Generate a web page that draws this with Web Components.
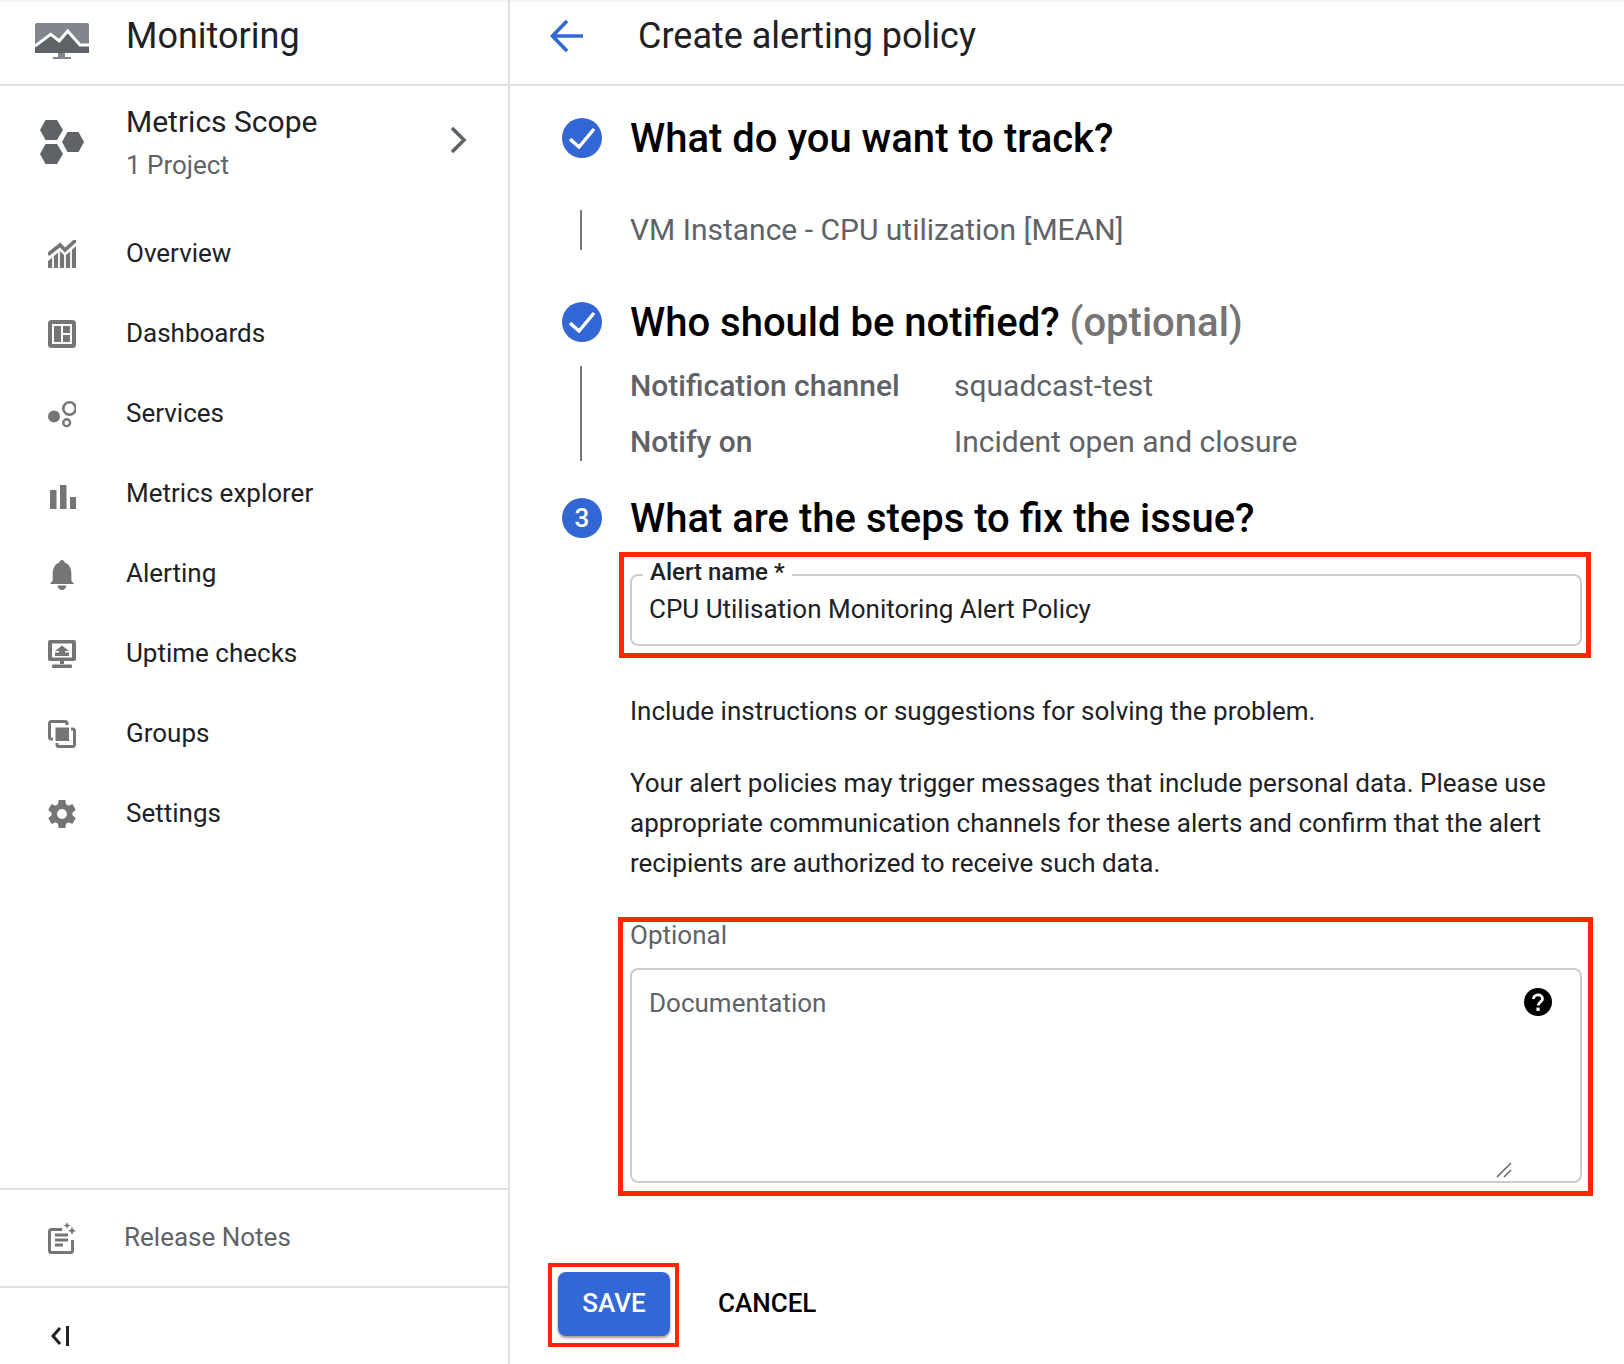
<!DOCTYPE html>
<html lang="en"><head><meta charset="utf-8"><title>Create alerting policy</title>
<style>
html,body{margin:0;padding:0;background:#fff}
body{font-family:Roboto,"Liberation Sans",sans-serif;color:#202124}
</style></head>
<body>
<mon-shell>
  <mon-sidebar slot="side">
    <mon-brand slot="top" title-text="Monitoring"></mon-brand>
    <mon-scope slot="top"></mon-scope>
    <nav-item icon="overview" label="Overview" slot="nav"></nav-item>
    <nav-item icon="dashboards" label="Dashboards" slot="nav"></nav-item>
    <nav-item icon="services" label="Services" slot="nav"></nav-item>
    <nav-item icon="metrics" label="Metrics explorer" slot="nav"></nav-item>
    <nav-item icon="alerting" label="Alerting" slot="nav"></nav-item>
    <nav-item icon="uptime" label="Uptime checks" slot="nav"></nav-item>
    <nav-item icon="groups" label="Groups" slot="nav"></nav-item>
    <nav-item icon="settings" label="Settings" slot="nav"></nav-item>
    <mon-sidefoot slot="foot"></mon-sidefoot>
  </mon-sidebar>
  <mon-page slot="main">
    <page-header>Create alerting policy</page-header>
    <step-head state="done" style="margin-top:32px">What do you want to track?</step-head>
    <step-line style="margin-top:52px;height:40px"><span class="sum" style="font-size:30px;color:#5f6368;margin-top:-2px">VM Instance - CPU utilization [MEAN]</span></step-line>
    <step-head state="done" style="margin-top:52px">Who should be notified? <span style="color:#757575">(optional)</span></step-head>
    <step-line style="margin-top:24px;height:95px">
      <kv-rows></kv-rows>
    </step-line>
    <step-head state="3" style="margin-top:37px">What are the steps to fix the issue?</step-head>
    <alert-name-field style="margin-top:14px"></alert-name-field>
    <help-copy></help-copy>
    <doc-field></doc-field>
    <form-actions></form-actions>
  </mon-page>
</mon-shell>
<script>
const G='#757575';
const ICONS={
overview:`<svg width="28" height="28" viewBox="0 0 28 28"><path d="M0 21l12-10 5 5L28 6v22H0z" fill="${G}"/><path d="M5 10v18M11 10v18M17 10v18M23 4v24" stroke="#fff" stroke-width="1.800" fill="none"/><path d="M0 14.500L12 5l5 5L28 0" fill="none" stroke="${G}" stroke-width="3.600"/></svg>`,
dashboards:`<svg width="28" height="28" viewBox="0 0 28 28"><rect width="28" height="28" rx="3.500" fill="${G}"/><rect x="4" y="4" width="20" height="20" fill="#fff"/><rect x="6" y="6" width="7" height="16" fill="${G}"/><rect x="15" y="6" width="7" height="7" fill="${G}"/><rect x="15" y="15" width="7" height="7" fill="${G}"/></svg>`,
services:`<svg width="28" height="28" viewBox="0 0 28 28" fill="none" stroke="${G}"><circle cx="6" cy="16.500" r="6" fill="${G}" stroke="none"/><circle cx="21.500" cy="8.500" r="6.200" stroke-width="2.600"/><circle cx="18.700" cy="22.700" r="3.400" stroke-width="2.400"/></svg>`,
metrics:`<svg width="28" height="29" viewBox="0 0 28 29" fill="${G}"><rect x="2" y="10" width="6.500" height="19"/><rect x="12" y="5" width="6.500" height="24"/><rect x="22" y="17" width="6" height="12"/></svg>`,
alerting:`<svg width="28" height="32" viewBox="0 0 28 32" fill="${G}"><g transform="translate(2 0) scale(.89 1)"><path d="M13.500 0c1.600 0 2.800 1 3 2.600C21.500 4 24 8.500 24 14v6.500l3 3.500H0l3-3.500V14C3 8.500 5.500 4 10.500 2.600 10.700 1 11.900 0 13.500 0z"/><path d="M8.500 25.500h10c0 2.500-2.800 4.500-5 4.500s-5-2-5-4.500z"/></g></svg>`,
uptime:`<svg width="28" height="28" viewBox="0 0 28 28"><path fill-rule="evenodd" fill="${G}" d="M2 0h24a2 2 0 0 1 2 2v17a2 2 0 0 1-2 2H2a2 2 0 0 1-2-2V2a2 2 0 0 1 2-2zm2 3.500v14h20v-14z"/><path fill="${G}" d="M14 5.500l7 5.500h-4v1.500h4V16H7v-3.500h4V11H7z"/><rect x="12" y="21" width="4" height="3" fill="${G}"/><rect x="4" y="24.500" width="20" height="3.500" rx="1" fill="${G}"/></svg>`,
groups:`<svg width="28" height="28" viewBox="0 0 28 28" fill="none" stroke="${G}" stroke-width="3"><path d="M5 19H3.500a2 2 0 0 1-2-2V3.500a2 2 0 0 1 2-2H17a2 2 0 0 1 2 2V5"/><path d="M23 9h1.500a2 2 0 0 1 2 2v13.500a2 2 0 0 1-2 2H11a2 2 0 0 1-2-2V23"/><rect x="7.500" y="7.500" width="13.500" height="13.500" fill="${G}" stroke="none"/></svg>`,
settings:`<svg width="28" height="28" viewBox="2 2 20 20" fill="${G}"><path d="M19.430 12.980c.040-.320.070-.640.070-.980s-.030-.660-.070-.980l2.110-1.650c.190-.150.240-.420.120-.640l-2-3.460c-.120-.220-.390-.300-.610-.220l-2.490 1c-.520-.400-1.080-.730-1.690-.980l-.380-2.650C14.460 2.180 14.250 2 14 2h-4c-.250 0-.460.180-.490.420l-.380 2.650c-.610.250-1.170.590-1.690.980l-2.490-1c-.230-.090-.490 0-.610.220l-2 3.460c-.130.220-.070.490.120.640l2.110 1.650c-.040.320-.070.650-.070.980s.030.660.070.980l-2.110 1.650c-.190.150-.240.420-.120.640l2 3.460c.120.220.390.300.610.220l2.490-1c.520.400 1.080.730 1.690.980l.380 2.650c.030.240.240.420.490.420h4c.250 0 .460-.180.490-.420l.380-2.650c.610-.250 1.170-.590 1.690-.980l2.490 1c.230.090.490 0 .610-.220l2-3.460c.120-.220.070-.490-.120-.640l-2.110-1.650zM12 15.500c-1.930 0-3.500-1.570-3.500-3.500s1.570-3.500 3.500-3.500 3.500 1.570 3.500 3.500-1.570 3.500-3.500 3.500z"/></svg>`
};
function def(name,css,html){
  customElements.define(name,class extends HTMLElement{
    constructor(){super();const s=this.attachShadow({mode:'open'});s.innerHTML=`<style>${css}</style>${typeof html==='function'?html(this):html}`;}
    connectedCallback(){
      if(typeof html==='function'){const s=this.shadowRoot;s.innerHTML=`<style>${css}</style>${html(this)}`;}
    }
  });
}
def('mon-shell',`:host{display:grid;grid-template-columns:510px 1fr;height:1364px;overflow:hidden;box-shadow:inset 0 2px 0 #f4f4f4}`,`<slot name="side"></slot><slot name="main"></slot>`);
def('mon-sidebar',`:host{display:flex;flex-direction:column;border-right:2px solid #e0e0e0;box-sizing:border-box;height:1364px}
 .nav{display:flex;flex-direction:column;margin-top:19px}
 .foot{margin-top:auto}`,
 `<slot name="top"></slot><div class="nav"><slot name="nav"></slot></div><div class="foot"><slot name="foot"></slot></div>`);
def('mon-brand',`:host{display:flex;align-items:center;height:84px;border-bottom:2px solid #e0e0e0;position:relative}
 svg{margin-left:35px;margin-top:-2px;flex:none}
 span{margin-left:37px;font-size:36px;color:#202124;margin-top:-13px}`,
 `<svg width="54" height="36" viewBox="0 0 54 36"><rect width="54" height="30" rx="2" fill="#80868b"/><path d="M0 23L15.700 11.300l8.600 6.700L32.700 8 45 22h9v8H0z" fill="#5f6368"/><path d="M0 23L15.700 11.300l8.600 6.700L32.700 8 45 22h9" fill="none" stroke="#fff" stroke-width="3"/><rect x="23" y="30" width="7" height="4.500" fill="#80868b"/><rect x="18" y="34" width="18" height="2" fill="#80868b"/></svg><span>Monitoring</span>`);
def('mon-scope',`:host{display:flex;height:108px;position:relative}
 .hex{margin:34px 0 0 40px;flex:none}
 .t{margin-left:42px;padding-top:18px}
 .a{font-size:30px;line-height:36px;color:#202124}
 .b{font-size:26px;line-height:36px;margin-top:7px;color:#5f6368}
 .ch{margin:40px 0 0 auto;margin-right:40px;flex:none}`,
 `<svg class="hex" width="44" height="44" viewBox="0 0 44 44" fill="#5f6368"><path d="M0 10L5.500 0h11.500L23 10 17 20H5.500z"/><path d="M22 22l5.500-10h11L44 22l-5.500 10h-11z"/><path d="M0 34l5.500-10h11.500L23 34 17 44H5.500z"/></svg>
 <div class="t"><div class="a">Metrics Scope</div><div class="b">1 Project</div></div>
 <svg class="ch" width="18" height="28" viewBox="0 0 18 28"><path d="M2 2l12 12L2 26" fill="none" stroke="#5f6368" stroke-width="3.600"/></svg>`);
def('nav-item',`:host{display:flex;align-items:center;height:80px;flex:none}
 .i{width:28px;height:28px;margin-left:48px;margin-top:1px;flex:none;display:flex;align-items:flex-start}
 .l{margin-left:50px;font-size:26px;color:#202124}`,
 el=>`<div class="i">${ICONS[el.getAttribute('icon')]||''}</div><div class="l">${el.getAttribute('label')||''}</div>`);
def('mon-sidefoot',`:host{display:block;border-top:2px solid #e0e0e0}
 .r{display:flex;align-items:center;height:96px;border-bottom:2px solid #e0e0e0}
 .r svg{margin-left:48px;flex:none}
 .r span{margin-left:48px;font-size:26px;color:#5f6368;margin-top:-3px}
 .c{display:flex;align-items:flex-start;height:76px}
 .c svg{margin-left:50px;margin-top:37px}`,
 `<div class="r"><svg width="28" height="32" viewBox="0 0 28 32"><path d="M14 7.500H3.500a2 2 0 0 0-2 2V28.500a2 2 0 0 0 2 2h19a2 2 0 0 0 2-2V18" fill="none" stroke="${G}" stroke-width="3"/><rect x="7" y="11.500" width="13" height="3" fill="${G}"/><rect x="7" y="16.500" width="13" height="3" fill="${G}"/><rect x="7" y="21.500" width="8" height="3" fill="${G}"/><path d="M19 0l1 2.500 2.500 1-2.500 1-1 2.500-1-2.500-2.500-1 2.500-1z" fill="${G}"/><path d="M24 4.500l1.200 3 2.800 1.200-2.800 1.200-1.200 3-1.200-3L20 8.700l2.800-1.200z" fill="${G}"/></svg><span>Release Notes</span></div>
 <div class="c"><svg width="20" height="22" viewBox="0 0 20 22"><path d="M10 3L3 11l7 8" fill="none" stroke="#202124" stroke-width="3"/><rect x="16" y="1" width="3" height="20" fill="#202124"/></svg></div>`);
def('mon-page',`:host{display:block;min-width:0}`,`<slot></slot>`);
def('page-header',`:host{display:flex;align-items:center;height:84px;border-bottom:2px solid #e0e0e0;margin-left:0}
 svg{margin-left:40px;flex:none;margin-top:-13px}
 span{margin-left:54px;font-size:36px;color:#202124;margin-top:-13px}`,
 `<svg width="34" height="34" viewBox="0 0 34 34"><path d="M17 2L2.500 17 17 32M2.500 17H33" fill="none" stroke="#3367d6" stroke-width="3.600"/></svg><span><slot></slot></span>`);
def('step-head',`:host{display:flex;align-items:center;height:40px;margin-left:52px;white-space:nowrap}
 .c{width:40px;height:40px;border-radius:50%;background:#3367d6;color:#fff;display:flex;align-items:center;justify-content:center;font-size:26px;font-weight:500;flex:none}
 .t{margin-left:28px;margin-top:2px;font-size:40px;font-weight:500;color:#000;line-height:40px}`,
 el=>{const s=el.getAttribute('state');return `<div class="c">${s==='done'?'<svg width="26" height="22" viewBox="0 0 26 22"><path d="M1 12l9 8L25 2" fill="none" stroke="#fff" stroke-width="3.400"/></svg>':s}</div><div class="t"><slot></slot></div>`});
def('step-line',`:host{display:flex;align-items:center;margin-left:70px;border-left:2px solid #757575;padding-left:48px;box-sizing:border-box;white-space:nowrap}`,`<slot></slot>`);
def('kv-rows',`:host{display:grid;grid-template-columns:324px auto;row-gap:20px;font-size:30px;line-height:36px;color:#5f6368;margin-top:1px}
 b{font-weight:500}`,
 `<b>Notification channel</b><span>squadcast-test</span><b>Notify on</b><span>Incident open and closure</span>`);
def('alert-name-field',`:host{display:block;margin-left:109px;margin-right:33px;border:5px solid #ff2600;box-sizing:border-box;height:106px;padding:17px 4px 0 6px}
 .b{position:relative;height:72px;box-sizing:border-box;border:2px solid #ccc;border-radius:8px}
 label{position:absolute;left:11px;top:-19px;background:#fff;padding:0 7px;font-size:24px;font-weight:500;line-height:30px;color:#202124}
 .v{padding:17px 0 0 17px;font-size:26px;line-height:32px;color:#202124}`,
 `<div class="b"><label>Alert name *</label><div class="v">CPU Utilisation Monitoring Alert Policy</div></div>`);
def('help-copy',`:host{display:block;margin:33px 40px 0 120px;font-size:26px;line-height:40px;color:#202124}
 p{margin:0}p+p{margin-top:32px}`,
 `<p>Include instructions or suggestions for solving the problem.</p><p>Your alert policies may trigger messages that include personal data. Please use appropriate communication channels for these alerts and confirm that the alert recipients are authorized to receive such data.</p>`);
def('doc-field',`:host{display:block;margin:34px 31px 0 108px;border:5px solid #ff2600;box-sizing:border-box;height:279px;padding:0 6px 0 7px}
 .o{font-size:26px;line-height:36px;color:#5f6368;margin-top:-5px;height:51px}
 .b{position:relative;box-sizing:border-box;height:215px;border:2px solid #ccc;border-radius:8px;padding:17px 17px;font-size:26px;line-height:32px;color:#5f6368}
 .q{position:absolute;right:28px;top:18px;width:28px;height:28px}
 .g{position:absolute;right:68px;bottom:3px;width:16px;height:16px}`,
 `<div class="o">Optional</div><div class="b">Documentation
 <svg class="q" viewBox="0 0 28 28"><circle cx="14" cy="14" r="14" fill="#000"/><path d="M9.500 11c0-2.500 2-4.200 4.500-4.200s4.500 1.700 4.500 4c0 3.300-4.300 3.400-4.300 6.700" fill="none" stroke="#fff" stroke-width="2.800"/><rect x="12.400" y="19.600" width="3.300" height="3.300" fill="#fff"/></svg>
 <svg class="g" viewBox="0 0 16 16"><path d="M1 15L15 1M8 15l7-7" stroke="#5f6368" stroke-width="1.500" fill="none"/></svg></div>`);
def('form-actions',`:host{display:flex;align-items:center;margin:67px 0 0 38px}
 .w{border:4px solid #ff2600;padding:5px 5px 7px 5px;width:131px;height:84px;box-sizing:border-box;flex:none}
 .s{height:64px;width:112px;background:#3367d6;color:#fff;border-radius:8px;font-size:26px;font-weight:500;display:flex;align-items:center;justify-content:center;box-shadow:0 2px 3px rgba(0,0,0,.4);margin-left:1px;padding-bottom:2px;box-sizing:border-box}
 .c{margin-left:39px;margin-top:-4px;font-size:26px;font-weight:500;color:#000}`,
 `<div class="w"><div class="s">SAVE</div></div><div class="c">CANCEL</div>`);
</script>
</body></html>
